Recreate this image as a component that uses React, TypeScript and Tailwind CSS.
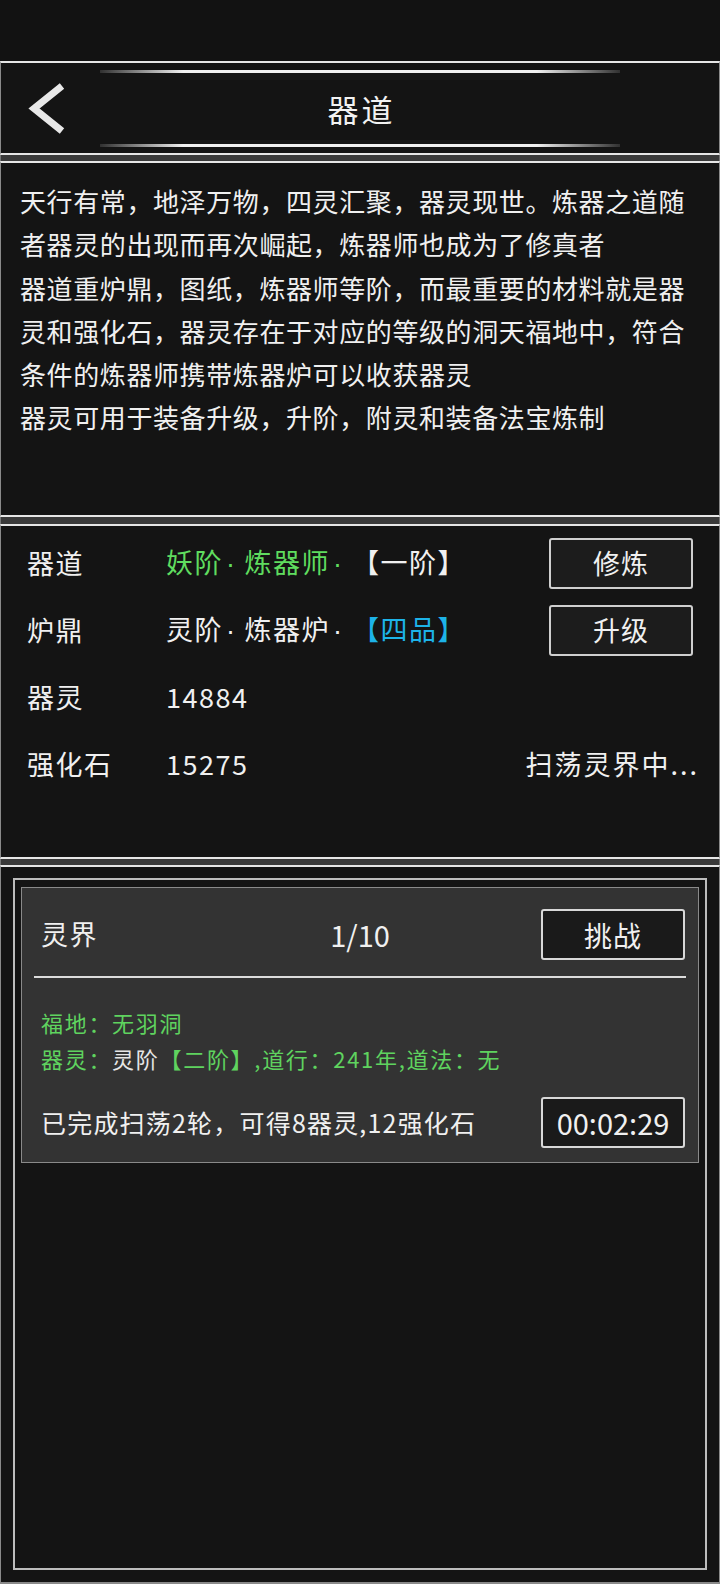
import React from "react";

const Sep = ({ h }: { h: string }) => (
  <div className={`${h} w-full bg-[#3a3a3a] border-x border-[#777]`} />
);

const Dot = () => <span className="font-['Liberation_Sans',sans-serif] pl-[3px] pr-[8px]">·</span>;

export default function App() {
  return (
    <div className="w-[720px] h-[1584px] bg-[#121212] flex flex-col font-['Noto_Sans_CJK_SC','Noto_Sans',sans-serif] text-[#f0f0f0] overflow-hidden">
      {/* top space */}
      <div className="h-[61px] shrink-0" />

      {/* header */}
      <div className="h-[94px] shrink-0 bg-[#141414] border-y-2 border-y-[#e6e6e6] border-x border-x-[#8a8a8a] flex flex-col">
        <div className="mt-[7px] mx-auto w-[520px] h-[3px] bg-[linear-gradient(90deg,rgba(255,255,255,0.12),#f0f0f0_16%,#f0f0f0_84%,rgba(255,255,255,0.12))]" />
        <div className="flex-1 grid grid-cols-[1fr_auto_1fr] items-center">
          <div className="pl-[27px] flex items-center">
            <svg width="40" height="52" viewBox="0 0 40 52">
              <polyline points="34,3 6,25.5 34,48" fill="none" stroke="#e8e8e8" strokeWidth="7" strokeLinejoin="miter" />
            </svg>
          </div>
          <div className="text-[31px] tracking-[3px] leading-none text-[#f2f2f2] pl-[3px]">器道</div>
          <div />
        </div>
        <div className="mb-[6px] mx-auto w-[520px] h-[3px] bg-[linear-gradient(90deg,rgba(255,255,255,0.12),#f0f0f0_16%,#f0f0f0_84%,rgba(255,255,255,0.12))]" />
      </div>

      <Sep h="h-[6px]" />

      {/* description */}
      <div className="h-[356px] shrink-0 bg-[#141414] border-y-2 border-y-[#e6e6e6] border-x border-x-[#8a8a8a] pt-[16px] pl-[19px] text-[26px] leading-[43.3px] tracking-[0.6px] whitespace-nowrap">
        <div>天行有常，地泽万物，四灵汇聚，器灵现世。炼器之道随</div>
        <div>者器灵的出现而再次崛起，炼器师也成为了修真者</div>
        <div>器道重炉鼎，图纸，炼器师等阶，而最重要的材料就是器</div>
        <div>灵和强化石，器灵存在于对应的等级的洞天福地中，符合</div>
        <div>条件的炼器师携带炼器炉可以收获器灵</div>
        <div>器灵可用于装备升级，升阶，附灵和装备法宝炼制</div>
      </div>

      <Sep h="h-[7px]" />

      {/* stats */}
      <div className="h-[335px] shrink-0 bg-[#141414] border-y-2 border-y-[#e6e6e6] border-x border-x-[#8a8a8a] pt-[4px] text-[27px] tracking-[1.5px]">
        <div className="flex h-[67px] items-center">
          <div className="w-[165px] pl-[26px]">器道</div>
          <div className="flex-1 whitespace-nowrap">
            <span className="text-[#5fdc5f]">妖阶<Dot />炼器师<Dot /></span>
            <span className="ml-[14px]">【一阶】</span>
          </div>
          <button className="mr-[26px] w-[144px] h-[51px] border-2 border-[#cfcfcf] rounded-[3px] bg-[#1c1c1c] text-[27px] tracking-[1px] text-[#f0f0f0]">修炼</button>
        </div>
        <div className="flex h-[67px] items-center">
          <div className="w-[165px] pl-[26px]">炉鼎</div>
          <div className="flex-1 whitespace-nowrap">
            <span>灵阶<Dot />炼器炉<Dot /></span>
            <span className="ml-[14px] text-[#1db3e8]">【四品】</span>
          </div>
          <button className="mr-[26px] w-[144px] h-[51px] border-2 border-[#cfcfcf] rounded-[3px] bg-[#1c1c1c] text-[27px] tracking-[1px] text-[#f0f0f0]">升级</button>
        </div>
        <div className="flex h-[67px] items-center">
          <div className="w-[165px] pl-[26px]">器灵</div>
          <div className="flex-1">14884</div>
        </div>
        <div className="flex h-[67px] items-center">
          <div className="w-[165px] pl-[26px]">强化石</div>
          <div className="flex-1">15275</div>
          <div className="pr-[20px] whitespace-nowrap tracking-[2px]">扫荡灵界中...</div>
        </div>
      </div>

      <Sep h="h-[6px]" />

      {/* bottom panel */}
      <div className="flex-1 bg-[#141414] border-t-2 border-t-[#e6e6e6] border-x border-x-[#8a8a8a] border-b-2 border-b-[#8a8a8a] pt-[11px] px-[12px] pb-[12px] flex">
        <div className="flex-1 border-2 border-[#bdbdbd] pt-[7px] px-[6px]">
          <div className="h-[276px] bg-[#333333] border border-[#8a8a8a] px-[13px] flex flex-col">
            <div className="mt-[21px] h-[51px] grid grid-cols-[1fr_auto_1fr] items-center">
              <div className="pl-[6px] text-[27px] tracking-[1.5px]">灵界</div>
              <div className="text-[29px]">1/10</div>
              <div className="flex justify-end">
                <button className="w-[144px] h-[51px] border-2 border-[#d8d8d8] rounded-[3px] bg-[#1a1a1a] text-[28px] tracking-[1px] text-[#f0f0f0]">挑战</button>
              </div>
            </div>
            <div className="mt-[16px] h-[2px] bg-[#dcdcdc] mr-[-1px] ml-[-1px]" />
            <div className="mt-[26px] pl-[6px] text-[22px] leading-[36px] tracking-[1.7px] text-[#5fd35f] whitespace-nowrap">
              <div>福地：无羽洞</div>
              <div>器灵：<span className="text-[#e6e6e6]">灵阶</span>【二阶】,道行：241年,道法：无</div>
            </div>
            <div className="mt-[21px] flex items-center justify-between">
              <div className="pl-[6px] text-[25px] tracking-[1.2px] whitespace-nowrap">已完成扫荡2轮，可得8器灵,12强化石</div>
              <div className="w-[144px] h-[51px] border-2 border-[#d8d8d8] rounded-[3px] bg-[#1a1a1a] text-[29px] flex items-center justify-center">00:02:29</div>
            </div>
          </div>
        </div>
      </div>
    </div>
  );
}
